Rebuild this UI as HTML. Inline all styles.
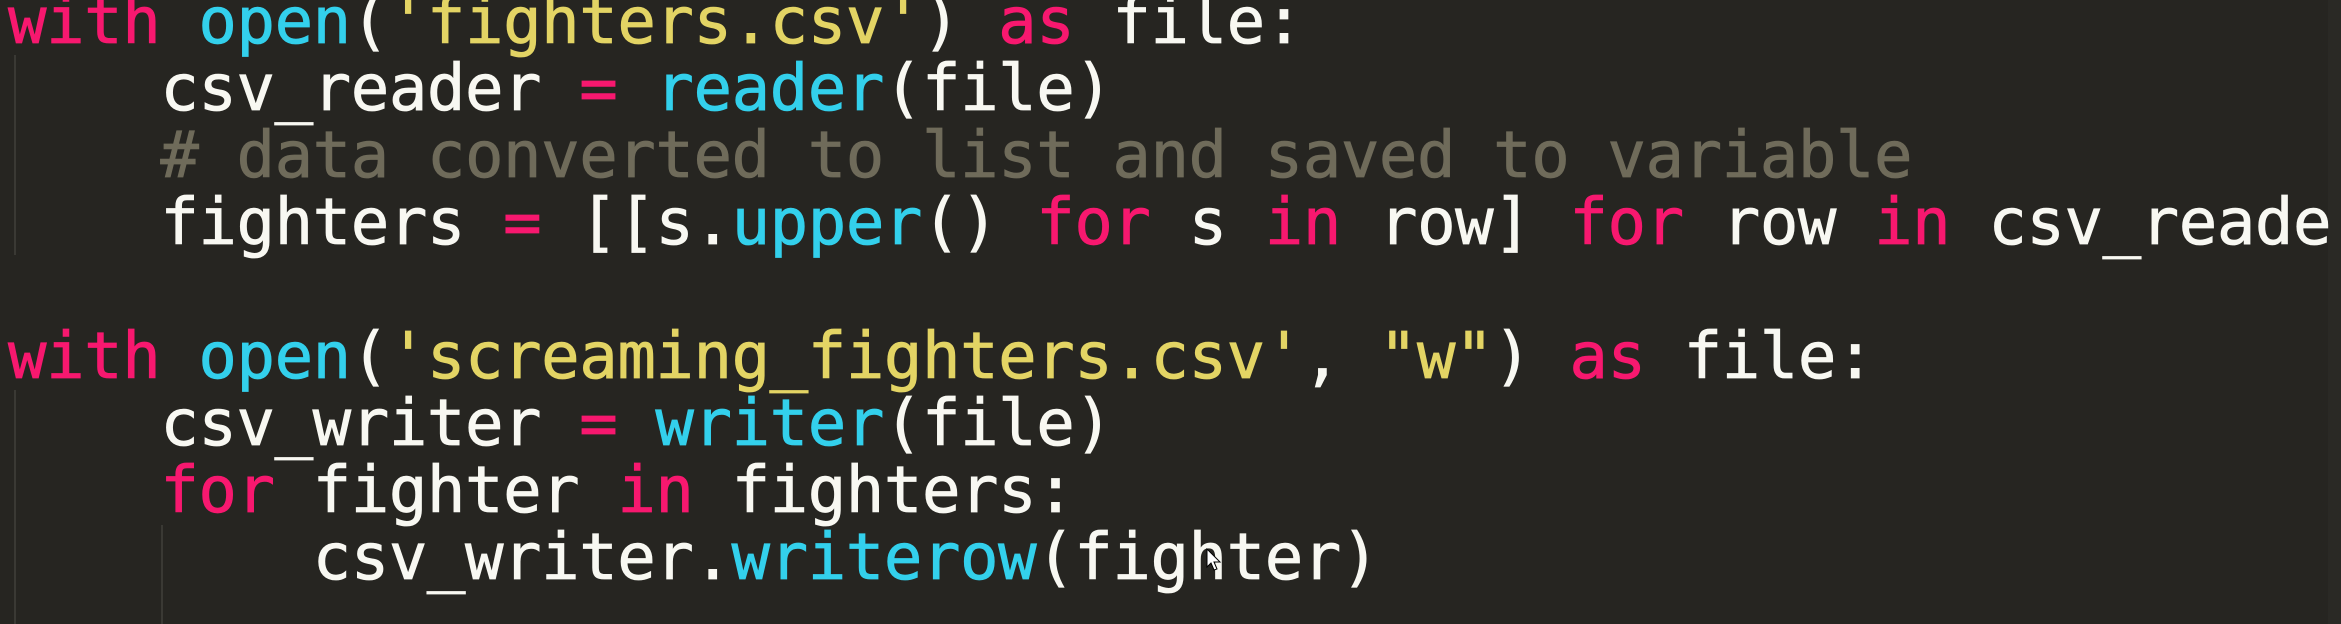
<!DOCTYPE html>
<html><head><meta charset="utf-8"><style>
html,body{margin:0;padding:0;}
body{width:2341px;height:624px;background:#262521;overflow:hidden;position:relative;}
pre{position:absolute;left:8px;top:-11px;margin:0;font-family:"DejaVu Sans Mono","Liberation Mono",monospace;font-size:64px;line-height:67px;letter-spacing:-0.45px;color:#f8f8f2;-webkit-text-stroke:0.8px currentColor;}
.k{color:#f7186f}.f{color:#33d0ec}.s{color:#e3d464}.c{color:#6f6b5a}
.g{position:absolute;width:2px;background:#3a3934;}
</style></head><body>
<div class="g" style="left:14px;top:55px;height:200px"></div>
<div class="g" style="left:14px;top:390px;height:234px"></div>
<div class="g" style="left:161px;top:525px;height:99px"></div>
<div style="position:absolute;left:2328px;top:0;width:13px;height:624px;background:#2a2925"></div>
<pre><span class="k">with</span> <span class="f">open</span>(<span class="s">'fighters.csv'</span>) <span class="k">as</span> file:
    csv_reader <span class="k">=</span> <span class="f">reader</span>(file)
    <span class="c"># data converted to list and saved to variable</span>
    fighters <span class="k">=</span> [[s.<span class="f">upper</span>() <span class="k">for</span> s <span class="k">in</span> row] <span class="k">for</span> row <span class="k">in</span> csv_reader]

<span class="k">with</span> <span class="f">open</span>(<span class="s">'screaming_fighters.csv'</span>, <span class="s">"w"</span>) <span class="k">as</span> file:
    csv_writer <span class="k">=</span> <span class="f">writer</span>(file)
    <span class="k">for</span> fighter <span class="k">in</span> fighters:
        csv_writer.<span class="f">writerow</span>(fighter)</pre>
<svg style="position:absolute;left:1206px;top:548px" width="16" height="24" viewBox="0 0 16 24"><path d="M1 1 L1 19 L5 15 L8 22 L11 21 L8 14 L14 14 Z" fill="#fff" stroke="#000" stroke-width="1"/></svg>
</body></html>
